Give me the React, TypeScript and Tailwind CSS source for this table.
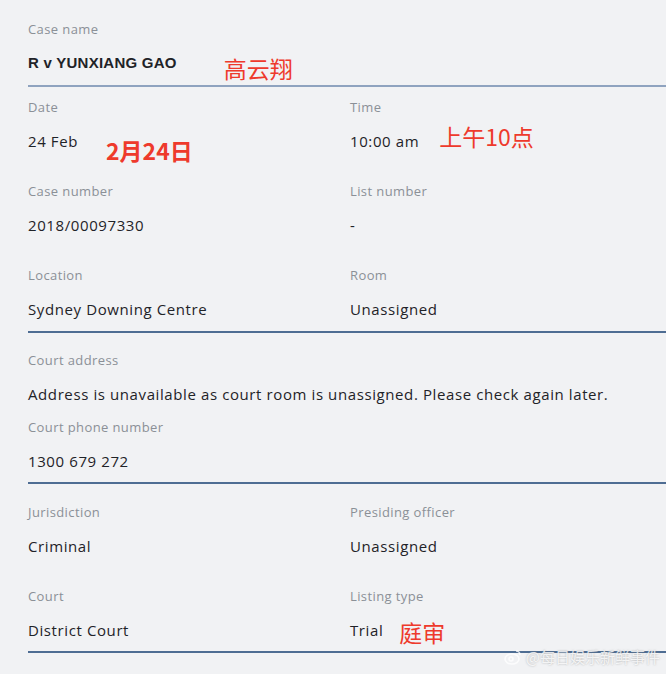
import type { ReactNode } from 'react'

/**
 * Court listing detail card, with red handwritten-style notes laid over it.
 */

function Label({ children }: { children: ReactNode }) {
  return <div className="h-5 text-[13px] leading-5 tracking-[0.4px] text-[#8b9097]">{children}</div>
}

function Value({ children, bold = false }: { children: ReactNode; bold?: boolean }) {
  return (
    <div
      className={`mt-[14px] h-5 whitespace-nowrap text-[15px] leading-5 text-[#1f2328] ${
        bold ? "font-['Liberation_Sans',sans-serif] font-bold tracking-[0.25px]" : 'tracking-[0.6px]'
      }`}
    >
      {children}
    </div>
  )
}

function Note({ children, className }: { children: ReactNode; className: string }) {
  return (
    <span
      className={`relative inline-block h-5 whitespace-nowrap align-top font-['Noto_Sans_CJK_SC',sans-serif] text-[23px] leading-5 tracking-normal text-[#ee3a2c] ${className}`}
    >
      {children}
    </span>
  )
}

function Field({
  label,
  children,
  bold,
  className = '',
}: {
  label: string
  children: ReactNode
  bold?: boolean
  className?: string
}) {
  return (
    <div className={className}>
      <Label>{label}</Label>
      <Value bold={bold}>{children}</Value>
    </div>
  )
}

export default function App() {
  return (
    <div className="relative h-[674px] w-[666px] overflow-hidden bg-[#f1f2f4] pl-[28px] font-['Open_Sans',sans-serif]">
      <section className="border-b-2 border-[#8fa3bf] pt-[19px] pb-[12px]">
        <Field label="Case name" bold>
          R v YUNXIANG GAO
          <Note className="top-[5px] ml-[47px] font-normal">高云翔</Note>
        </Field>
      </section>

      <section className="grid grid-cols-[322px_1fr] border-b-2 border-[#4e6d93] pt-[10px] pb-[12px]">
        <Field label="Date">
          24 Feb
          <Note className="top-[9px] ml-[28px] font-bold">2月24日</Note>
        </Field>
        <Field label="Time">
          10:00 am
          <Note className="top-[-5px] ml-[20px]">上午10点</Note>
        </Field>
        <Field label="Case number" className="mt-[30px]">
          2018/00097330
        </Field>
        <Field label="List number" className="mt-[30px]">
          -
        </Field>
        <Field label="Location" className="mt-[30px]">
          Sydney Downing Centre
        </Field>
        <Field label="Room" className="mt-[30px]">
          Unassigned
        </Field>
      </section>

      <section className="border-b-2 border-[#4e6d93] pt-[17px] pb-[11px]">
        <Field label="Court address">
          Address is unavailable as court room is unassigned. Please check again later.
        </Field>
        <Field label="Court phone number" className="mt-[13px]">
          1300 679 272
        </Field>
      </section>

      <section className="grid grid-cols-[322px_1fr] border-b-2 border-[#4e6d93] pt-[18px] pb-[11px]">
        <Field label="Jurisdiction">Criminal</Field>
        <Field label="Presiding officer">Unassigned</Field>
        <Field label="Court" className="mt-[30px]">
          District Court
        </Field>
        <Field label="Listing type" className="mt-[30px]">
          Trial
          <Note className="top-[2px] ml-[16px]">庭审</Note>
        </Field>
      </section>

      <div className="absolute right-[6px] top-[646px] flex items-center gap-1 font-['Noto_Sans_CJK_SC',sans-serif] text-[15px] text-white/80 [text-shadow:0_0_2px_rgba(120,120,120,0.6)]">
        <svg width="18" height="16" viewBox="0 0 18 16" fill="none" stroke="currentColor" strokeWidth="1.6">
          <ellipse cx="8" cy="10" rx="7" ry="5" />
          <circle cx="7" cy="10" r="2" />
          <path d="M12 2a4 4 0 0 1 4 4" />
        </svg>
        <span>@每日娱乐新鲜事件</span>
      </div>
    </div>
  )
}
